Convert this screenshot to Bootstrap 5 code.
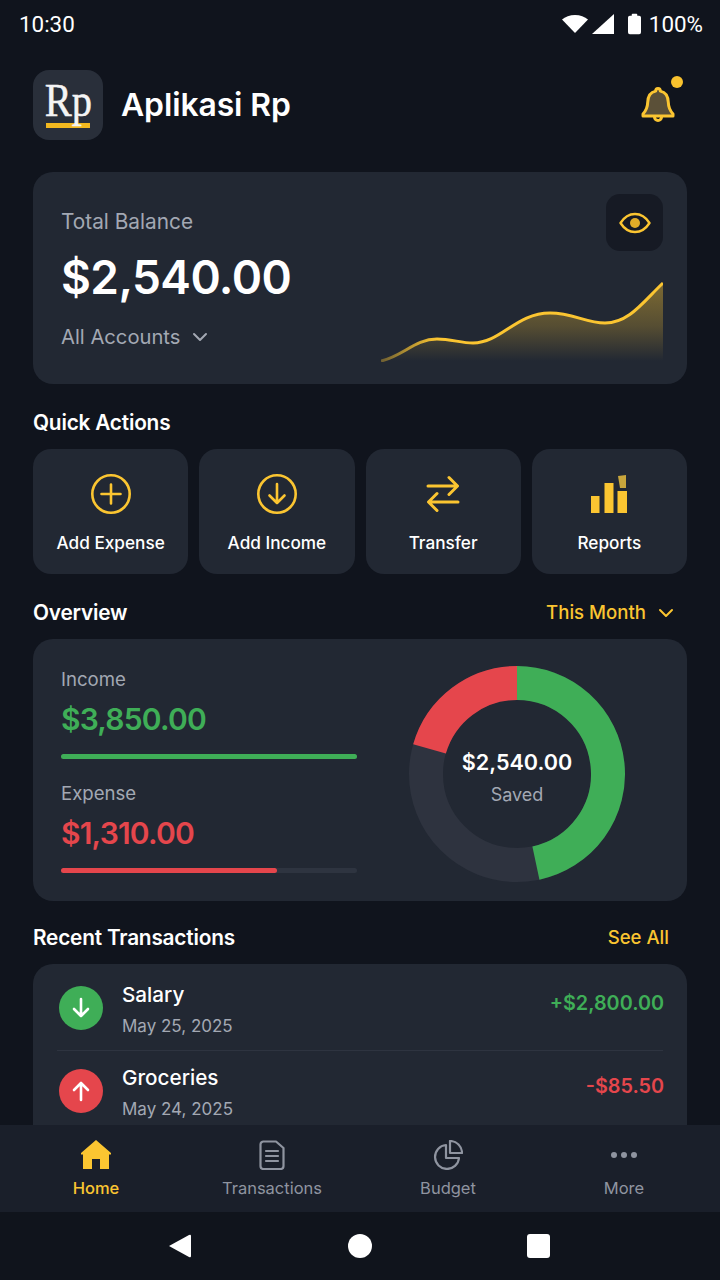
<!DOCTYPE html>
<html lang="en">
<head>
<meta charset="utf-8">
<title>Aplikasi Rp</title>
<link href="https://cdn.jsdelivr.net/npm/bootstrap@5.3.0/dist/css/bootstrap.min.css" rel="stylesheet">
<style>
html,body{margin:0;height:1280px;overflow:hidden;background:#10141d}
body{font-family:Inter,"Liberation Sans",sans-serif;color:#fff}
.screen{width:720px;height:1280px}
.sbar{height:48px;padding:0 17px 0 19px;font-family:Roboto,sans-serif;font-size:22.4px;line-height:1}
.si-a{margin-right:4px}.si-b{margin-right:14px}.si-c{margin-right:8px}
.main-area{min-height:0;padding:0 33px;overflow:hidden}
.topbar{margin-top:22px;height:70px}
.logo-box{width:70px;height:70px;border-radius:16px;background:#292f3a;padding-top:8px}
.logo-txt{font-family:"Liberation Serif",serif;font-size:47px;line-height:45px;height:45px;transform:scaleX(.86);color:#f4f4f4;-webkit-text-stroke:.5px #f4f4f4}
.logo-bar{width:44px;height:5px;background:#f2b81f}
.app-name{font-size:31.9px;font-weight:600;margin-left:18px;letter-spacing:-.1px}
.bell-box{width:48px;height:48px;margin-right:5px}
.dotty{width:12px;height:12px;border-radius:50%;background:#f9c22e;top:-5px;right:-1px}
.panel.card{--bs-card-bg:#222833;--bs-card-border-width:0;--bs-card-border-radius:20px;--bs-card-color:#fff}
.bal{margin-top:32px;height:212px;padding:22px 24px 22px 28px}
.muted-t{color:#a3a8b3}
.bal-l{font-size:20.8px;line-height:24px;margin-top:16px}
.bal-v{font-size:46px;font-weight:600;line-height:58px;margin-top:14px;letter-spacing:-.6px}
.bal-a{font-size:20.2px;line-height:24px;margin-top:19px}
.chev-a{margin-left:11px}
.eye-btn{width:57px;height:57px;border-radius:14px;background:#161a24}
.h-sec{font-size:20.8px;font-weight:600;line-height:26px;letter-spacing:-.2px}
.sec1{margin-top:26px}
.tiles{margin-top:13px;gap:11px}
.tile{height:125px;flex:1 1 0;background:#222833;border-radius:18px}
.tile-ic{height:44px;margin-top:24px}
.tile-t{font-size:17.2px;font-weight:500;line-height:22px;margin-top:15px}
.sec2{margin-top:25px;padding-right:12px}
.yel{color:#fbc531;font-size:18.6px;font-weight:500}
.ovr{margin-top:12px;height:262px;padding:27px 62px 0 28px}
.ovr-left{width:296px}
.ov-l{font-size:18.6px;line-height:26px}
.ov-v{font-size:30px;font-weight:600;line-height:40px;margin-top:7px;letter-spacing:-.8px}
.trk{height:5px;border-radius:3px;margin-top:15px;background:#2e3440}
.fil{height:5px;border-radius:3px}
.exp-l{margin-top:21px}
.green-t{color:#3fae57}.red-t{color:#e5464c}
.bg-g{background:#3fae57}.bg-r{background:#e5464c}
.dn-box{width:216px;height:216px;margin-top:0;margin-left:auto}
.dn-center{padding-top:6px}
.dn-amt{font-size:21.600px;font-weight:600;line-height:30px}
.dn-sv{font-size:18px;line-height:24px;margin-top:6px}
.sec3{margin-top:23px;padding-right:18px}
.lst{margin-top:12px;height:200px;overflow:hidden;padding-top:2px}
.tx-row{height:84px;padding:0 23px 0 26px}
.tx-second{margin-top:-2px}
.tx-div{height:1px;background:#2e3440;margin:0 24px;flex:none}
.tx-ic{width:44px;height:44px;border-radius:50%;margin-right:19px}
.tx-txt{margin-top:4px}
.tx-n{font-size:20.7px;font-weight:500;line-height:26px}
.tx-d{font-size:17px;line-height:24px;margin-top:6px}
.tx-am{font-size:19.8px;font-weight:600;margin-top:-7px}
.bnav{height:87px;background:#1a1f2a;padding:0 8px;flex:none}
.bnav-i{width:176px;color:#8f94a0;font-size:16.5px;line-height:20px}
.bnav-svg{height:32px;margin-top:15px;margin-bottom:6px}
.on-t{color:#fbc531;font-weight:500}
.sysnav{height:68px;background:#10141c;flex:none}
</style>
</head>
<body>
<div class="screen d-flex flex-column">
  <div class="sbar d-flex align-items-center justify-content-between flex-shrink-0">
    <span>10:30</span>
    <span class="d-flex align-items-center">
      <svg width="26" height="18" viewBox="0 0 26 18" class="si-a"><path d="M0 4.500C3 1.800 8 0 13 0s10 1.800 13 4.500L13 18z" fill="#fff"/></svg>
      <svg width="22" height="20" viewBox="0 0 22 20" class="si-b"><path d="M22 0v20H0z" fill="#fff"/></svg>
      <svg width="13" height="22" viewBox="0 0 14 22" class="si-c"><path d="M4 2V1q0-1 1-1h4q1 0 1 1v1h2q2 0 2 2v16q0 2-2 2H2q-2 0-2-2V4q0-2 2-2z" fill="#fff"/></svg>
      <span>100%</span>
    </span>
  </div>
  <div class="main-area flex-grow-1">
    <div class="topbar d-flex align-items-center">
      <div class="logo-box d-flex flex-column align-items-center flex-shrink-0">
        <div class="logo-txt">Rp</div>
        <div class="logo-bar"></div>
      </div>
      <div class="app-name">Aplikasi Rp</div>
      <div class="bell-box ms-auto position-relative d-flex align-items-center justify-content-center">
        <svg width="36" height="38" viewBox="0 0 36 38"><path d="M18 2.500c1.400 0 2.300 1 2.300 2.600 5.600 1.100 7.800 5.300 8 11.200.1 4.700 1.300 8 4.700 11.700v2H3v-2c3.400-3.700 4.600-7 4.700-11.700.2-5.900 2.400-10.100 8-11.200 0-1.600.9-2.600 2.300-2.600z" fill="#5b5038" stroke="#fbc531" stroke-width="3" stroke-linejoin="round"/><path d="M14.500 31a3.500 3.500 0 0 0 7 0" fill="none" stroke="#fbc531" stroke-width="3"/></svg>
        <span class="dotty position-absolute"></span>
      </div>
    </div>

    <div class="panel card bal flex-row justify-content-between">
      <div>
        <div class="bal-l muted-t">Total Balance</div>
        <div class="bal-v">$2,540.00</div>
        <div class="bal-a muted-t d-flex align-items-center">All Accounts
          <svg class="chev-a" width="18" height="12" viewBox="0 0 18 12"><path d="M3 3l6 6 6-6" fill="none" stroke="#a3a8b3" stroke-width="2" stroke-linecap="round" stroke-linejoin="round"/></svg>
        </div>
      </div>
      <div class="d-flex flex-column align-items-end justify-content-between">
        <div class="eye-btn d-flex align-items-center justify-content-center">
          <svg width="32" height="22" viewBox="0 0 32 22"><path d="M1.500 11C5 5.500 10 2 16 2s11 3.500 14.500 9C27 16.500 22 20 16 20S5 16.500 1.500 11z" fill="none" stroke="#fbc531" stroke-width="2.400" stroke-linejoin="round"/><circle cx="16" cy="11" r="5" fill="#e2ad28"/></svg>
        </div>
        <svg width="282" height="82" viewBox="0 0 282 82">
          <defs>
            <linearGradient id="sf" x1="0" y1="0" x2="0" y2="1"><stop offset="0" stop-color="#fbc531" stop-opacity=".42"/><stop offset=".55" stop-color="#fbc531" stop-opacity=".24"/><stop offset="1" stop-color="#fbc531" stop-opacity="0"/></linearGradient>
            <linearGradient id="sl" x1="0" y1="0" x2="1" y2="0"><stop offset="0" stop-color="#fbc531" stop-opacity=".35"/><stop offset=".2" stop-color="#fbc531"/></linearGradient>
          </defs>
          <path d="M0 81C22 76 34 59 56 59C70 59 80 63 92 63C120 63 135 33 169 33C192 33 205 43 224 43C248 43 262 22 282 3V81z" fill="url(#sf)"/>
          <path d="M0 81C22 76 34 59 56 59C70 59 80 63 92 63C120 63 135 33 169 33C192 33 205 43 224 43C248 43 262 22 282 3" fill="none" stroke="url(#sl)" stroke-width="3"/>
        </svg>
      </div>
    </div>

    <div class="h-sec sec1">Quick Actions</div>
    <div class="tiles d-flex">
      <div class="tile text-center">
        <div class="tile-ic"><svg width="42" height="42" viewBox="0 0 42 42" fill="none" stroke="#fbc531" stroke-width="2.600" stroke-linecap="round"><circle cx="21" cy="21" r="18.700"/><path d="M21 11.500v19M11.500 21h19"/></svg></div>
        <div class="tile-t">Add Expense</div>
      </div>
      <div class="tile text-center">
        <div class="tile-ic"><svg width="42" height="42" viewBox="0 0 42 42" fill="none" stroke="#fbc531" stroke-width="2.600" stroke-linecap="round" stroke-linejoin="round"><circle cx="21" cy="21" r="18.700"/><path d="M21 11v19M13.500 22.500 21 30l7.500-7.500"/></svg></div>
        <div class="tile-t">Add Income</div>
      </div>
      <div class="tile text-center">
        <div class="tile-ic"><svg width="36" height="42" viewBox="0 0 36 42" fill="none" stroke="#fbc531" stroke-width="3" stroke-linecap="round" stroke-linejoin="round"><path d="M3 13h29M24 4.500l8.500 8.500-8.500 8.500M33 29H4M12 20.500 3.500 29l8.500 8.500"/></svg></div>
        <div class="tile-t">Transfer</div>
      </div>
      <div class="tile text-center">
        <div class="tile-ic"><svg width="36" height="42" viewBox="0 0 36 42"><rect x="0" y="23" width="8.500" height="17" fill="#fbc531"/><rect x="13.500" y="10" width="9" height="30" fill="#fbc531"/><rect x="26.500" y="18" width="9.500" height="22" fill="#fbc531"/><path d="M27 3l8-1v13h-6z" fill="#c9a63c"/></svg></div>
        <div class="tile-t">Reports</div>
      </div>
    </div>

    <div class="d-flex justify-content-between align-items-center sec2">
      <div class="h-sec">Overview</div>
      <div class="yel d-flex align-items-center">This Month
        <svg class="chev-a" width="18" height="12" viewBox="0 0 18 12"><path d="M3 3l6 6 6-6" fill="none" stroke="#fbc531" stroke-width="2" stroke-linecap="round" stroke-linejoin="round"/></svg>
      </div>
    </div>

    <div class="panel card ovr flex-row">
      <div class="ovr-left">
        <div class="ov-l muted-t">Income</div>
        <div class="ov-v green-t">$3,850.00</div>
        <div class="trk"><div class="fil bg-g w-100"></div></div>
        <div class="ov-l muted-t exp-l">Expense</div>
        <div class="ov-v red-t">$1,310.00</div>
        <div class="trk"><div class="fil bg-r" style="width:73%"></div></div>
      </div>
      <div class="dn-box position-relative">
        <svg width="216" height="216" viewBox="0 0 216 216" fill="none" stroke-width="34">
          <circle cx="108" cy="108" r="91" stroke="#2e333f"/>
          <path d="M108 17A91 91 0 0 1 126.920 197.010" stroke="#3fae57"/>
          <path d="M20.520 82.920A91 91 0 0 1 108 17" stroke="#e5464c"/>
        </svg>
        <div class="dn-center position-absolute top-50 start-50 translate-middle text-center text-nowrap">
          <div class="dn-amt">$2,540.00</div>
          <div class="dn-sv muted-t">Saved</div>
        </div>
      </div>
    </div>

    <div class="d-flex justify-content-between align-items-center sec3">
      <div class="h-sec">Recent Transactions</div>
      <div class="yel">See All</div>
    </div>

    <div class="panel card lst">
      <div class="tx-row d-flex align-items-center flex-shrink-0">
        <div class="tx-ic bg-g d-flex align-items-center justify-content-center flex-shrink-0">
          <svg width="24" height="24" viewBox="0 0 24 24" fill="none" stroke="#fff" stroke-width="2.600" stroke-linecap="round" stroke-linejoin="round"><path d="M12 3v17M5 13l7 7 7-7"/></svg>
        </div>
        <div class="tx-txt"><div class="tx-n">Salary</div><div class="tx-d muted-t">May 25, 2025</div></div>
        <div class="tx-am green-t ms-auto">+$2,800.00</div>
      </div>
      <div class="tx-div"></div>
      <div class="tx-row tx-second d-flex align-items-center flex-shrink-0">
        <div class="tx-ic bg-r d-flex align-items-center justify-content-center flex-shrink-0">
          <svg width="24" height="24" viewBox="0 0 24 24" fill="none" stroke="#fff" stroke-width="2.600" stroke-linecap="round" stroke-linejoin="round"><path d="M12 21V4M5 11l7-7 7 7"/></svg>
        </div>
        <div class="tx-txt"><div class="tx-n">Groceries</div><div class="tx-d muted-t">May 24, 2025</div></div>
        <div class="tx-am red-t ms-auto">-$85.50</div>
      </div>
    </div>
  </div>

  <nav class="bnav d-flex">
    <div class="bnav-i text-center on-t">
      <div class="bnav-svg"><svg width="30" height="30" viewBox="0 0 30 30"><path d="M15 0 30 13v1.500h-2V29h-9V19h-8v10H2V14.500H0V13z" fill="#fbc531"/></svg></div>
      Home
    </div>
    <div class="bnav-i text-center">
      <div class="bnav-svg"><svg width="26" height="30" viewBox="0 0 26 30" fill="none" stroke="#8f94a0" stroke-width="2.200" stroke-linecap="round" stroke-linejoin="round"><path d="M4 1.500h13L24.500 8v18a3 3 0 0 1-3 3h-17a3 3 0 0 1-3-3v-21.500a3 3 0 0 1 3-3z"/><path d="M7 11h12M7 16h12M7 21h12"/></svg></div>
      Transactions
    </div>
    <div class="bnav-i text-center">
      <div class="bnav-svg"><svg width="30" height="30" viewBox="0 0 30 30" fill="none" stroke="#8f94a0" stroke-width="2.200" stroke-linejoin="round"><path d="M13 5a12 12 0 1 0 13 13H13z"/><path d="M17 1a12 12 0 0 1 12 12H17z"/></svg></div>
      Budget
    </div>
    <div class="bnav-i text-center">
      <div class="bnav-svg"><svg width="28" height="30" viewBox="0 0 28 30" fill="#8f94a0"><circle cx="4" cy="15" r="3"/><circle cx="14" cy="15" r="3"/><circle cx="24" cy="15" r="3"/></svg></div>
      More
    </div>
  </nav>

  <div class="sysnav d-flex align-items-center justify-content-center">
    <svg width="400" height="26" viewBox="0 0 400 26" fill="#fff">
      <path d="M9 13 29 2q2-1 2 1v20q0 2-2 1z"/>
      <circle cx="200" cy="13" r="12"/>
      <rect x="367" y="1" width="23" height="24" rx="3"/>
    </svg>
  </div>
</div>
</body>
</html>
